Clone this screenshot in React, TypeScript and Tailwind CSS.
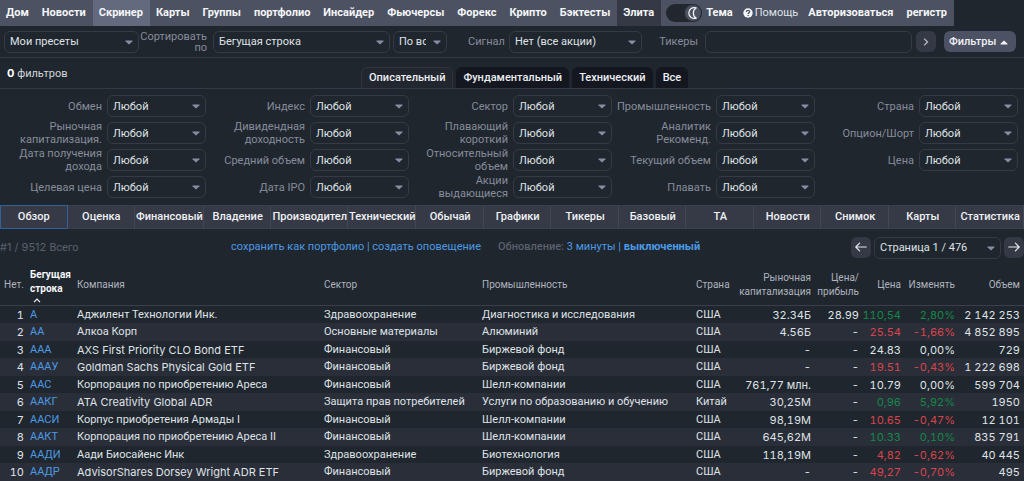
import React from "react";

const cyr = "font-['Roboto','Noto_Sans',sans-serif]";
const lat = "font-['Inter','Roboto',sans-serif]";

function Caret({ up = false, className = "" }: { up?: boolean; className?: string }) {
  return (
    <svg viewBox="0 0 10 6" className={`h-[5px] w-2 shrink-0 ${className}`} fill="currentColor" aria-hidden="true">
      {up ? <path d="M1 5.5h8a.5.5 0 0 0 .35-.85L5.4.7a.6.6 0 0 0-.8 0L.65 4.65A.5.5 0 0 0 1 5.5Z" /> : <path d="M1 .5h8a.5.5 0 0 1 .35.85L5.4 5.3a.6.6 0 0 1-.8 0L.65 1.35A.5.5 0 0 1 1 .5Z" />}
    </svg>
  );
}

function Select({ id, label, value, className }: { id: string; label?: string; value: string; className: string }) {
  return (
    <div className={`relative ${className}`}>
      <select
        id={id}
        aria-label={label}
        className="block h-[22px] w-full appearance-none rounded-md border border-[#363a46] bg-[#20262d] pl-[5px] pr-5 pt-px text-[11px] leading-4 text-[#dfe2e7] outline-none"
      >
        <option>{value}</option>
      </select>
      <Caret className="pointer-events-none absolute right-[6px] top-[9px] text-[#868ea5]" />
    </div>
  );
}

const nav = ["Дом", "Новости", "Скринер", "Карты", "Группы", "портфолио", "Инсайдер", "Фьючерсы", "Форекс", "Крипто", "Бэктесты", "Элита"];

function NavLink({ name }: { name: string }) {
  const bg = name === "Скринер" ? "bg-[#636a7e]" : name === "Элита" ? "bg-[#353945]" : "";
  return (
    <a href="#" className={`flex h-full items-center pl-[6px] pr-[7px] pt-px ${bg}`}>
      {name}
    </a>
  );
}

function Nav() {
  return (
    <header className="flex">
      <nav className="flex h-[26px] items-center whitespace-nowrap bg-[#4c5261] text-[11px] font-bold text-[#f5f6f8]">
        {nav.map((n) => (
          <NavLink key={n} name={n} />
        ))}
        <label className="flex h-full items-center gap-1 pl-[5px] pr-[6px]">
          <input type="checkbox" role="switch" defaultChecked className="sr-only" />
          <span className="flex h-[18px] w-9 items-center justify-end rounded-full bg-[#22262f]">
            <span className="flex h-[18px] w-[18px] items-center justify-center rounded-full bg-[#4c5261] ring-1 ring-[#22262f] ring-inset">
              <svg viewBox="0 0 16 16" className="h-3.5 w-3.5" fill="none" stroke="#f5f6f8" strokeWidth="1.4" strokeLinejoin="round" aria-hidden="true">
                <path d="M11.6 2.2A6.2 6.2 0 1 0 11.6 13.8C9.6 12.8 8.4 10.6 8.4 8s1.2-4.8 3.2-5.8Z" />
              </svg>
            </span>
          </span>
          Тема
        </label>
        <a href="#" className="flex h-full items-center gap-[2px] px-1 font-normal text-[#dfe2e7]">
          <svg viewBox="0 0 16 16" className="h-[10px] w-[10px]" aria-hidden="true">
            <circle cx="8" cy="8" r="7.5" fill="#f5f6f8" />
            <path d="M5.3 6.3C5.4 4.6 6.5 3.8 8 3.8s2.7.9 2.7 2.2c0 1.8-2.5 1.8-2.5 3.6" fill="none" stroke="#4c5261" strokeWidth="2" />
            <circle cx="8.2" cy="12" r="1.2" fill="#4c5261" />
          </svg>
          Помощь
        </a>
        <a href="#" className="flex h-full items-center pl-[6px] pr-[7px] pt-px">Авторизоваться</a>
        <a href="#" className="flex h-full items-center pl-[6px] pr-[7px] pt-px">регистр</a>
      </nav>
    </header>
  );
}

function Toolbar() {
  return (
    <div className="flex h-8 items-center border-b border-[#343945] pl-1 pr-2 text-[11px] text-[#868c9b]">
      <Select id="presets" label="Пресеты" value="Мои пресеты" className="w-[135px] shrink-0" />
      <label htmlFor="sort" className="w-[68px] shrink-0 pt-px text-right leading-[11px]">
        Сортировать по
      </label>
      <Select id="sort" value="Бегущая строка" className="ml-[6px] w-[177px] shrink-0" />
      <Select id="order" label="Порядок" value="По возрастанию" className="ml-[3px] w-[54px] shrink-0" />
      <label htmlFor="signal" className="ml-[21px] mr-[6px] w-[35px] shrink-0 whitespace-nowrap pt-px text-right">Сигнал</label>
      <Select id="signal" value="Нет (все акции)" className="w-[133px] shrink-0" />
      <label htmlFor="tickers" className="ml-4 mr-[7px] w-10 shrink-0 pt-px text-right">Тикеры</label>
      <input id="tickers" type="text" className="h-[22px] min-w-0 flex-1 rounded-md border border-[#363a46] bg-transparent px-2 text-[#dfe2e7] outline-none" />
      <button type="button" aria-label="Применить" className="ml-1 flex h-[21px] w-5 items-center justify-center rounded-md bg-[#353945]">
        <svg viewBox="0 0 8 8" className="h-2 w-2" fill="none" stroke="#b5bac7" strokeWidth="1.2" aria-hidden="true">
          <path d="M2.2.8 5.6 4 2.2 7.2" />
        </svg>
      </button>
      <button type="button" className="ml-2 flex h-[21px] w-[72px] items-center justify-between whitespace-nowrap rounded-md bg-[#4c5263] pl-[5px] pr-2 pt-px font-medium text-[#f0f1f4]">
        Фильтры
        <Caret up />
      </button>
    </div>
  );
}

const filterTabs = ["Описательный", "Фундаментальный", "Технический", "Все"];

function FilterTabs() {
  return (
    <div className="flex h-[31px] items-end justify-between border-b border-[#343945]">
      <p className="w-[361px] pb-[7px] pl-[7px] text-[11px] leading-[14px] text-[#d3d6dd]">
        <span className={`${lat} font-bold text-white`}>0</span> фильтров
      </p>
      <div className="flex flex-1 gap-[3px] text-[11px] font-medium text-[#eceef2]" role="tablist">
        {filterTabs.map((t, i) => (
          <button
            key={t}
            type="button"
            role="tab"
            aria-selected={i === 0}
            className={`h-[21px] whitespace-nowrap rounded-t-md px-[7px] pt-px ${i === 0 ? "border border-b-0 border-[#2f343f] bg-[#22272f]" : "bg-[#14171f]"}`}
          >
            {t}
          </button>
        ))}
      </div>
    </div>
  );
}

const filters: (string[] | null)[] = [
  ["Обмен"], ["Индекс"], ["Сектор"], ["Промышленность"], ["Страна"],
  ["Рыночная", "капитализация."], ["Дивидендная", "доходность"], ["Плавающий", "короткий"], ["Аналитик", "Рекоменд."], ["Опцион/Шорт"],
  ["Дата получения", "дохода"], ["Средний объем"], ["Относительный", "объем"], ["Текущий объем"], ["Цена"],
  ["Целевая цена"], ["Дата IPO"], ["Акции", "выдающиеся"], ["Плавать"], null,
];

function Filters() {
  return (
    <div className="grid grid-cols-5 gap-y-[5px] pb-[7px] pl-[3px] pr-[6px] pt-[6px] text-[11px] text-[#868c9b]">
      {filters.map((f, i) =>
        f ? (
          <div key={i} className="flex h-[22px] items-center justify-end gap-[5px]">
            <label htmlFor={`f${i}`} className="whitespace-nowrap text-right leading-[13px]">
              {f.map((line) => (
                <span key={line} className="block">{line}</span>
              ))}
            </label>
            <Select id={`f${i}`} value="Любой" className="w-[99px] shrink-0" />
          </div>
        ) : null,
      )}
    </div>
  );
}

const views = ["Обзор", "Оценка", "Финансовый", "Владение", "Производител", "Технический", "Обычай", "Графики", "Тикеры", "Базовый", "ТА", "Новости", "Снимок", "Карты", "Статистика"];

function Views() {
  return (
    <div className="grid h-6 grid-cols-[repeat(15,minmax(min-content,1fr))] bg-[#353a46] text-[11px] font-medium text-[#f0f1f4]" role="tablist">
      {views.map((v, i) => (
        <button
          key={v}
          type="button"
          role="tab"
          aria-selected={i === 0}
          className={`whitespace-nowrap border pt-px text-center ${i === 0 ? "border-[#35619a]" : "border-y-[#3b404d] border-l-transparent border-r-[#424756]"}`}
        >
          {v}
        </button>
      ))}
    </div>
  );
}

function Arrow({ right = false }: { right?: boolean }) {
  return (
    <button type="button" aria-label={right ? "Следующая страница" : "Предыдущая страница"} className="flex h-[21px] w-5 items-center justify-center rounded-md bg-[#353945]">
      <svg viewBox="0 0 12 10" className="h-[10px] w-3" fill="none" stroke="#e6e8ec" strokeWidth="1.2" strokeLinecap="round" strokeLinejoin="round" aria-hidden="true">
        {right ? <path d="M.8 5h10.4M7.4 1.2 11.2 5 7.4 8.8" /> : <path d="M11.2 5H.8M4.6 1.2.8 5l3.8 3.8" />}
      </svg>
    </button>
  );
}

function Status() {
  return (
    <div className="flex h-9 items-center whitespace-nowrap pt-px text-[11px] text-[#5b606d]">
      <p className={`w-[231px] ${lat}`}>#1 / 9512 <span className={cyr}>Всего</span></p>
      <p className="w-[267px] text-[#4b9ae6]">
        <a href="#">сохранить как портфолио</a> | <a href="#">создать оповещение</a>
      </p>
      <p className="text-[#4b9ae6]">
        <span className="font-medium text-[#5b606d]">Обновление:</span> <a href="#">3 минуты</a> | <a href="#" className="font-bold">выключенный</a>
      </p>
      <div className="ml-auto flex gap-[3px]">
        <Arrow />
        <Select id="page" label="Страница" value="Страница 1 / 476" className="w-[127px]" />
        <Arrow right />
      </div>
    </div>
  );
}

type Row = [string, string, string, string, string, string, string, string, string, string];
const rows: Row[] = [
  ["А", "Аджилент Технологии Инк.", "Здравоохранение", "Диагностика и исследования", "США", "32.34Б", "28.99", "110,54", "2,80%", "2 142 253"],
  ["АА", "Алкоа Корп", "Основные материалы", "Алюминий", "США", "4.56Б", "-", "25.54", "-1,66%", "4 852 895"],
  ["ААА", "AXS First Priority CLO Bond ETF", "Финансовый", "Биржевой фонд", "США", "-", "-", "24.83", "0,00%", "729"],
  ["АААУ", "Goldman Sachs Physical Gold ETF", "Финансовый", "Биржевой фонд", "США", "-", "-", "19.51", "-0,43%", "1 222 698"],
  ["ААС", "Корпорация по приобретению Ареса", "Финансовый", "Шелл-компании", "США", "761,77 млн.", "-", "10.79", "0,00%", "599 704"],
  ["ААКГ", "ATA Creativity Global ADR", "Защита прав потребителей", "Услуги по образованию и обучению", "Китай", "30,25М", "-", "0,96", "5,92%", "1950"],
  ["ААСИ", "Корпус приобретения Армады I", "Финансовый", "Шелл-компании", "США", "98,19М", "-", "10.65", "-0,47%", "12 101"],
  ["ААКТ", "Корпорация по приобретению Ареса II", "Финансовый", "Шелл-компании", "США", "645,62М", "-", "10.33", "0,10%", "835 791"],
  ["ААДИ", "Аади Биосайенс Инк", "Здравоохранение", "Биотехнология", "США", "118,19М", "-", "4,82", "-0,62%", "40 445"],
  ["ААДР", "AdvisorShares Dorsey Wright ADR ETF", "Финансовый", "Биржевой фонд", "США", "-", "-", "49,27", "-0,70%", "495"],
];

function tone(change: string) {
  if (change.startsWith("-")) return "text-[#d9444c]";
  return change === "0,00%" ? "" : "text-[#15884a]";
}

function Results() {
  const num = `text-right tabular-nums ${lat}`;
  return (
    <table className="w-full table-fixed border-collapse whitespace-nowrap text-[11px] leading-4 text-[#dfe2e7]">
      <colgroup>
        <col className="w-[30px]" />
        <col className="w-[47px]" />
        <col />
        <col className="w-[158px]" />
        <col className="w-[214px]" />
        <col className="w-[37px]" />
        <col className="w-[78px]" />
        <col className="w-[48px]" />
        <col className="w-[42px]" />
        <col className="w-[54px]" />
        <col className="w-[69px]" />
      </colgroup>
      <thead>
        <tr className="h-10 border-b border-[#3a3f4b] text-left text-[10px] text-[#aeb3bf] [&>th]:p-0 [&>th]:pt-px [&>th]:font-normal [&>th]:leading-[14px]">
          <th scope="col"><div className="pl-1">Нет.</div></th>
          <th scope="col" aria-sort="ascending">
            <div className="font-bold text-[#f5f6f8]">
              Бегущая<br />строка
              <svg viewBox="0 0 8 5" className="ml-[3px] mt-[2px] h-[5px] w-2" fill="none" stroke="currentColor" strokeWidth="1.2" aria-hidden="true">
                <path d="M1 4.2 4 1.2l3 3" />
              </svg>
            </div>
          </th>
          <th scope="col">Компания</th>
          <th scope="col">Сектор</th>
          <th scope="col">Промышленность</th>
          <th scope="col">Страна</th>
          <th scope="col"><div className="flex flex-col items-end"><span>Рыночная</span><span>капитализация</span></div></th>
          <th scope="col"><div className="flex flex-col items-end"><span>Цена/</span><span>прибыль</span></div></th>
          <th scope="col"><div className="text-right">Цена</div></th>
          <th scope="col"><div className="text-right">Изменять</div></th>
          <th scope="col"><div className="pr-1 text-right">Объем</div></th>
        </tr>
      </thead>
      <tbody>
        {rows.map((r, i) => (
          <tr key={r[0]} className="h-[17px] even:h-[18px] even:bg-[#2a2e38] [&>td]:p-0 [&>td]:pt-px">
            <td className={num}><div className="pr-[6px]">{i + 1}</div></td>
            <td><a href="#" className="text-[#4b9ae6]">{r[0]}</a></td>
            <td className={/^[A-Z]/.test(r[1]) ? lat : cyr}>{r[1]}</td>
            <td>{r[2]}</td>
            <td>{r[3]}</td>
            <td>{r[4]}</td>
            <td className={num}>{r[5]}</td>
            <td className={num}>{r[6]}</td>
            <td className={`${num} ${tone(r[8])}`}>{r[7]}</td>
            <td className={`${num} ${tone(r[8])}`}>{r[8]}</td>
            <td className={num}><div className="pr-1">{r[9]}</div></td>
          </tr>
        ))}
      </tbody>
    </table>
  );
}

export default function App() {
  return (
    <div className={`min-h-screen overflow-hidden bg-[#20262d] ${cyr}`}>
      <Nav />
      <Toolbar />
      <FilterTabs />
      <Filters />
      <Views />
      <Status />
      <Results />
    </div>
  );
}
